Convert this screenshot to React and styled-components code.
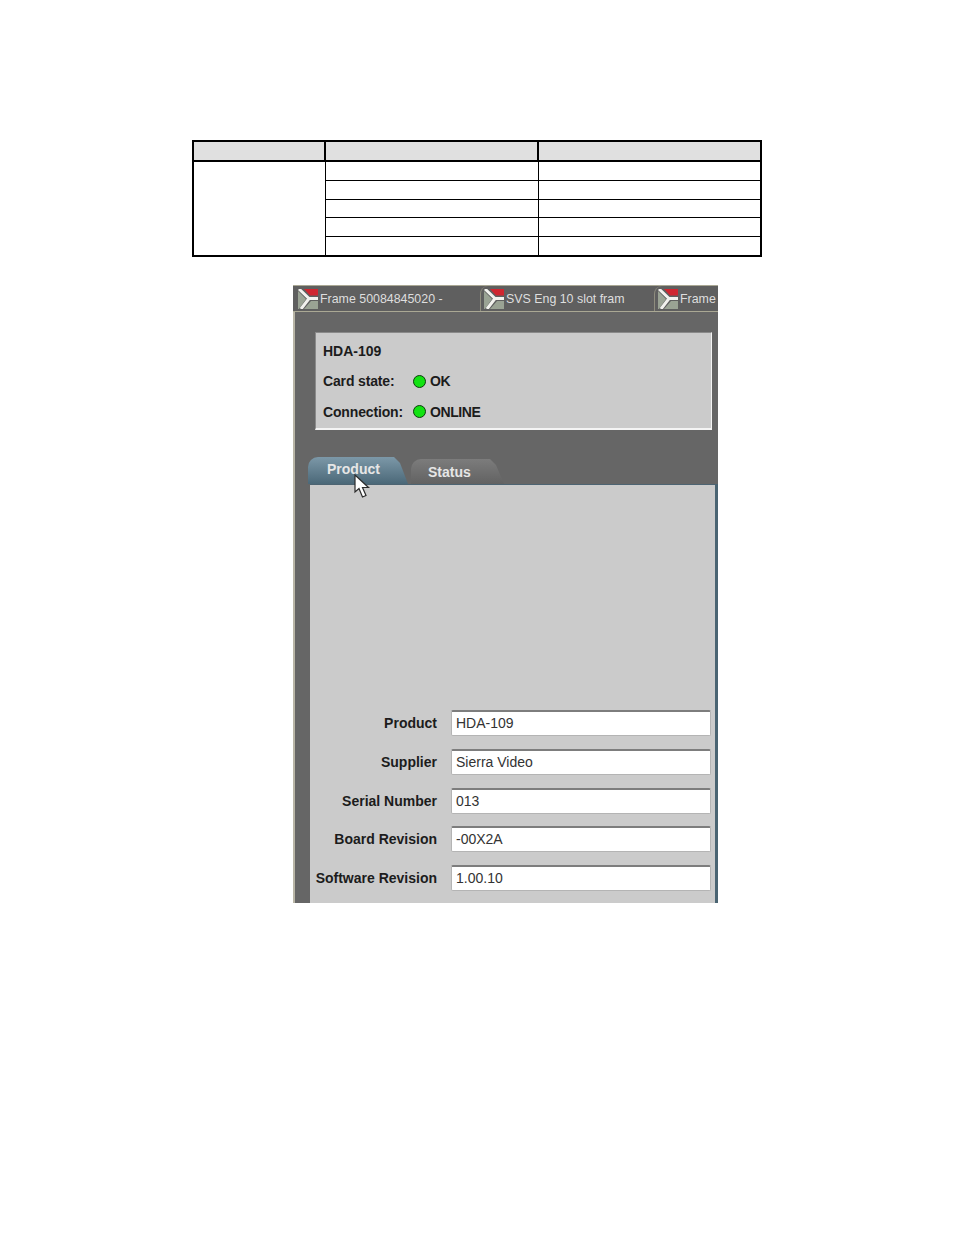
import React from 'react'
import styled, { createGlobalStyle } from 'styled-components'

const GlobalStyle = createGlobalStyle`
body{
    margin: 0;
    background: #fff;
    font-family: "Liberation Sans", Arial, sans-serif;
}
`

const frames = [
    { name: 'Frame 50084845020 -', width: 187 },
    { name: 'SVS Eng 10 slot fram', width: 174 },
    { name: 'Frame', width: 64 },
]

const fields = [
    { label: 'Product', value: 'HDA-109' },
    { label: 'Supplier', value: 'Sierra Video' },
    { label: 'Serial Number', value: '013' },
    { label: 'Board Revision', value: '-00X2A' },
    { label: 'Software Revision', value: '1.00.10' },
]

function FrameLogo() {
    return (
        <svg width="20" height="20" viewBox="0 0 20 20">
            <path d="M0 2 L8 10 L1 20 L0 20 Z" fill="#9aa394" />
            <path d="M6 20 L13 12 L20 12 L20 20 Z" fill="#9aa394" />
            <path d="M6 0 L20 0 L20 6.5 L12 6.5 Z" fill="#cf2630" />
            <path d="M1 0 L11 9.5 L20 9.5 M11 9.5 L3 20" fill="none" stroke="#f2f2ee" strokeWidth="3" />
        </svg>
    )
}

function Arrow() {
    return (
        <svg width="17" height="25" viewBox="0 0 17 25">
            <path d="M1 1 L1 18 L5 14.5 L8.5 23 L12 21.5 L8.5 13.5 L14.5 13.5 Z" fill="#fff" stroke="#2b2b2b" strokeWidth="1.2" />
        </svg>
    )
}

function App() {
    return (
        <Page>
            <GlobalStyle />
            <Table>
                <colgroup>
                    <col width="132" />
                    <col width="213" />
                    <col width="223" />
                </colgroup>
                <thead>
                    <tr>
                        <HeadCell />
                        <HeadCell />
                        <HeadCell />
                    </tr>
                </thead>
                <tbody>
                    {[19, 19, 18, 19, 20].map((h, i) => (
                        <BodyRow key={i} $height={h}>
                            {i === 0 && <Cell rowSpan={5} />}
                            <Cell />
                            <Cell />
                        </BodyRow>
                    ))}
                </tbody>
            </Table>

            <Window>
                <FrameBar>
                    {frames.map(f => (
                        <FrameTab key={f.name} $width={f.width}>
                            <FrameLogo />
                            <span>{f.name}</span>
                        </FrameTab>
                    ))}
                </FrameBar>
                <Body>
                    <InfoBox>
                        <InfoTitle>HDA-109</InfoTitle>
                        <InfoRow>
                            <InfoLabel>Card state:</InfoLabel>
                            <Led />
                            <InfoValue>OK</InfoValue>
                        </InfoRow>
                        <InfoRow>
                            <InfoLabel>Connection:</InfoLabel>
                            <Led />
                            <InfoValue>ONLINE</InfoValue>
                        </InfoRow>
                    </InfoBox>
                    <Tabs>
                        <Tab $active>Product</Tab>
                        <Tab>Status</Tab>
                        <Pointer><Arrow /></Pointer>
                    </Tabs>
                    <Content>
                        {fields.map(f => (
                            <Field key={f.label}>
                                <FieldLabel>{f.label}</FieldLabel>
                                <FieldValue>{f.value}</FieldValue>
                            </Field>
                        ))}
                    </Content>
                </Body>
            </Window>
        </Page>
    )
}

export default App

const Page = styled.div`
height: 1235px;
padding-top: 140px;
box-sizing: border-box;
overflow: hidden;
`

const Table = styled.table`
margin-left: 192px;
width: 570px;
table-layout: fixed;
border-collapse: collapse;
border: 2px solid #000;
`

const HeadCell = styled.th`
height: 18px;
padding: 0;
background: #e0e0e0;
border: 2px solid #000;
`

const BodyRow = styled.tr`
height: ${props => props.$height}px;
`

const Cell = styled.td`
padding: 0;
background: #fff;
border: 1px solid #000;
`

const Window = styled.div`
margin: 28px 0 0 293px;
width: 425px;
height: 618px;
display: flex;
flex-direction: column;
background: #666;
overflow: hidden;
box-shadow: inset 2px 0 0 #b8b5a6;
`

const FrameBar = styled.div`
height: 27px;
flex: none;
display: flex;
background: #5f5f5f;
border-top: 1px solid #aaa894;
border-bottom: 1px solid #aaa894;
box-sizing: border-box;
`

const FrameTab = styled.div`
width: ${props => props.$width}px;
flex: none;
display: flex;
align-items: center;
gap: 2px;
padding-left: 3px;
box-sizing: border-box;
border-left: 1px solid #8f8d7e;
border-top-left-radius: 8px;
color: #dedede;
font-size: 12.4px;
white-space: nowrap;
overflow: hidden;

&:first-child{
    border-left: none;
    padding-left: 5px;
}
`

const Body = styled.div`
flex: 1;
padding: 20px 3px 0 17px;
display: flex;
flex-direction: column;
`

const InfoBox = styled.div`
margin: 0 3px 0 5px;
height: 98px;
box-sizing: border-box;
padding: 3px 7px;
display: flex;
flex-direction: column;
background: #cbcbcb;
border-top: 1px solid #8a8a8a;
border-left: 1px solid #8a8a8a;
border-right: 1px solid #f4f4f4;
border-bottom: 2px solid #f4f4f4;
color: #1c1c1c;
font-size: 14px;
font-weight: bold;
`

const InfoTitle = styled.div`
height: 30px;
line-height: 30px;
`

const InfoRow = styled.div`
height: 30.5px;
flex: none;
display: flex;
align-items: center;
`

const InfoLabel = styled.span`
width: 90px;
flex: none;
letter-spacing: -0.15px;
`

const Led = styled.span`
width: 11px;
height: 11px;
flex: none;
border-radius: 50%;
background: #12e212;
border: 1px solid #0d3d0d;
`

const InfoValue = styled.span`
margin-left: 4px;
letter-spacing: -0.4px;
`

const Tabs = styled.div`
position: relative;
margin: 27px 0 0 -2px;
height: 27px;
display: flex;
gap: 3px;
`

const Tab = styled.div`
width: ${props => props.$active ? 100 : 93}px;
height: ${props => props.$active ? 27 : 25}px;
align-self: flex-end;
box-sizing: border-box;
padding: ${props => props.$active ? '4px 0 0 19px' : '5px 0 0 17px'};
background: ${props => props.$active
        ? 'linear-gradient(#7c98a8, #4b6878)'
        : 'linear-gradient(#7c7c7c, #626262)'};
border-top-left-radius: 10px;
clip-path: polygon(0 0, calc(100% - 14px) 0, calc(100% - 8px) 6px, 100% 100%, 0 100%);
color: #e6e6e6;
font-size: 14px;
font-weight: bold;
`

const Pointer = styled.div`
position: absolute;
left: 46px;
top: 17px;
line-height: 0;
`

const Content = styled.div`
flex: 1;
padding: 225px 4px 0 0;
display: flex;
flex-direction: column;
gap: 12.8px;
background: #cbcbcb;
border-top: 1px solid #4d6472;
box-shadow: 3px 0 0 #4a6472;
`

const Field = styled.div`
display: flex;
align-items: center;
gap: 14px;
height: 26px;
flex: none;
`

const FieldLabel = styled.div`
width: 127px;
flex: none;
text-align: right;
color: #1c1c1c;
font-size: 14px;
font-weight: bold;
white-space: nowrap;
`

const FieldValue = styled.div`
flex: 1;
height: 100%;
box-sizing: border-box;
padding-left: 4px;
line-height: 22px;
background: #fff;
border: 1px solid #b4b4b4;
border-top: 2px solid #7d7d7d;
border-radius: 2px;
color: #333;
font-size: 14px;
`
